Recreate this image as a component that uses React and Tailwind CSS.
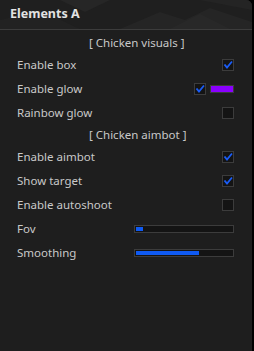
import React from "react";

function Check({ checked }) {
  return (
    <div className="w-[12px] h-[12px] border border-[#3c3c3c] bg-[#141414] flex items-center justify-center">
      {checked && (
        <svg width="10" height="10" viewBox="0 0 10 10">
          <path d="M2 5.2 L4 7.6 L8.4 2.2" fill="none" stroke="#1a5cf5" strokeWidth="1.8" strokeLinecap="square" />
        </svg>
      )}
    </div>
  );
}

function Slider({ pct }) {
  return (
    <div className="w-[100px] h-[8px] border border-[#3c3c3c] bg-[#141414] p-[1px] flex">
      <div className="h-full bg-[#0f5af2]" style={{ width: pct + "%" }} />
    </div>
  );
}

function Row({ label, children }) {
  return (
    <div className="h-6 flex items-center justify-between pl-[17px] pr-[18px]">
      <span>{label}</span>
      <div className="flex items-center gap-[4px]">{children}</div>
    </div>
  );
}

function Section({ label }) {
  return (
    <div className="h-[20px] flex items-center pl-[89px]">
      <span>{label}</span>
    </div>
  );
}

export default function App() {
  return (
    <div className="w-[254px] h-[351px] bg-black" style={{ fontFamily: '"Noto Sans", "Open Sans", sans-serif' }}>
      <div className="w-[252px] h-[351px] bg-[#1e1e1e] rounded-tr-[6px] overflow-hidden flex flex-col text-[11.5px] text-[#c9c9c9]">
        <div className="relative h-[29px] bg-[#1f1f1f] flex items-center pl-[10px]">
          <svg className="absolute inset-0" width="252" height="29" viewBox="0 0 252 29">
            <polygon points="60,0 110,0 85,12" fill="#262626" />
            <polygon points="120,29 160,12 185,20 210,8 252,22 252,29" fill="#252525" />
            <polygon points="170,29 200,14 230,29" fill="#282828" />
            <polygon points="0,29 0,20 40,10 80,29" fill="#222222" />
            <polygon points="200,0 252,0 252,10" fill="#242424" />
          </svg>
          <span className="relative text-[12.5px] font-bold text-[#e2e2e2]">Elements A</span>
        </div>
        <div className="h-[1px] bg-[#3c3c3c]" />
        <div className="pt-[3px] flex flex-col">
          <Section label="[ Chicken visuals ]" />
          <Row label="Enable box"><Check checked /></Row>
          <Row label="Enable glow">
            <Check checked />
            <div className="w-[24px] h-[8px] border border-[#3c3c3c] bg-[#8a00ff]" />
          </Row>
          <Row label="Rainbow glow"><Check /></Row>
          <Section label="[ Chicken aimbot ]" />
          <Row label="Enable aimbot"><Check checked /></Row>
          <Row label="Show target"><Check checked /></Row>
          <Row label="Enable autoshoot"><Check /></Row>
          <Row label="Fov"><Slider pct={7} /></Row>
          <Row label="Smoothing"><Slider pct={66} /></Row>
        </div>
      </div>
    </div>
  );
}
